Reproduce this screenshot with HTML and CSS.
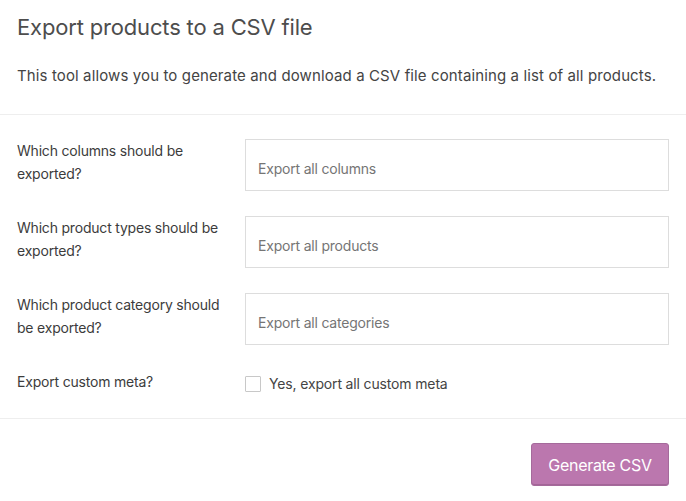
FILE: index.html
```html
<!DOCTYPE html>
<html>
<head>
<meta charset="utf-8">
<link rel="stylesheet" href="styles.css">
</head>
<body>
<div class="panel">
  <header class="intro">
    <h1 class="title">Export products to a CSV file</h1>
    <p class="desc">This tool allows you to generate and download a CSV file containing a list of all products.</p>
  </header>
  <section class="fields">
    <div class="label">Which columns should be exported?</div>
    <div class="field"><div class="select">Export all columns</div></div>
    <div class="label">Which product types should be exported?</div>
    <div class="field"><div class="select">Export all products</div></div>
    <div class="label">Which product category should be exported?</div>
    <div class="field"><div class="select">Export all categories</div></div>
    <div class="label">Export custom meta?</div>
    <div class="field"><label class="check"><span class="box"></span><span>Yes, export all custom meta</span></label></div>
  </section>
  <footer class="actions">
    <button class="btn">Generate CSV</button>
  </footer>
</div>
</body>
</html>
```
FILE: styles.css
```css
html, body { margin: 0; padding: 0; background: #fff; }
body { font-family: Inter, "Liberation Sans", Arial, sans-serif; color: #444; }
.intro { padding: 13px 17px 26px; border-bottom: 1px solid #eee; }
.title { margin: 0; font-size: 22px; line-height: 28px; font-weight: 400; color: #4d4d4d; letter-spacing: -0.17px; }
.desc { margin: 23px 0 0; font-size: 15px; line-height: 24px; color: #444; letter-spacing: 0.12px; }
.fields { display: grid; grid-template-columns: 228px 1fr; row-gap: 25px; padding: 24px 17px 25px; border-bottom: 1px solid #eee; }
.label { font-size: 14px; line-height: 23px; color: #3c3c3c; padding-right: 10px; letter-spacing: -0.2px; }
.select { height: 52px; box-sizing: border-box; border: 1px solid #ddd; padding: 19px 12px 0; font-size: 14px; line-height: 20px; color: #757575; letter-spacing: -0.2px; }
.check { display: flex; align-items: center; gap: 8px; font-size: 14px; color: #444; padding-top: 5px; letter-spacing: -0.15px; }
.box { width: 16px; height: 16px; box-sizing: border-box; border: 1px solid #c8c8c8; border-radius: 1px; background: #fff; }
.actions { display: flex; justify-content: flex-end; padding: 24px 17px; }
.btn { width: 138px; height: 43px; background: #bb77ae; color: #fff; border: 1px solid #a56a9b; border-radius: 3px; font-family: inherit; font-size: 16px; letter-spacing: -0.3px; padding: 0; box-shadow: inset 0 -1px 0 #a36597; }
```
